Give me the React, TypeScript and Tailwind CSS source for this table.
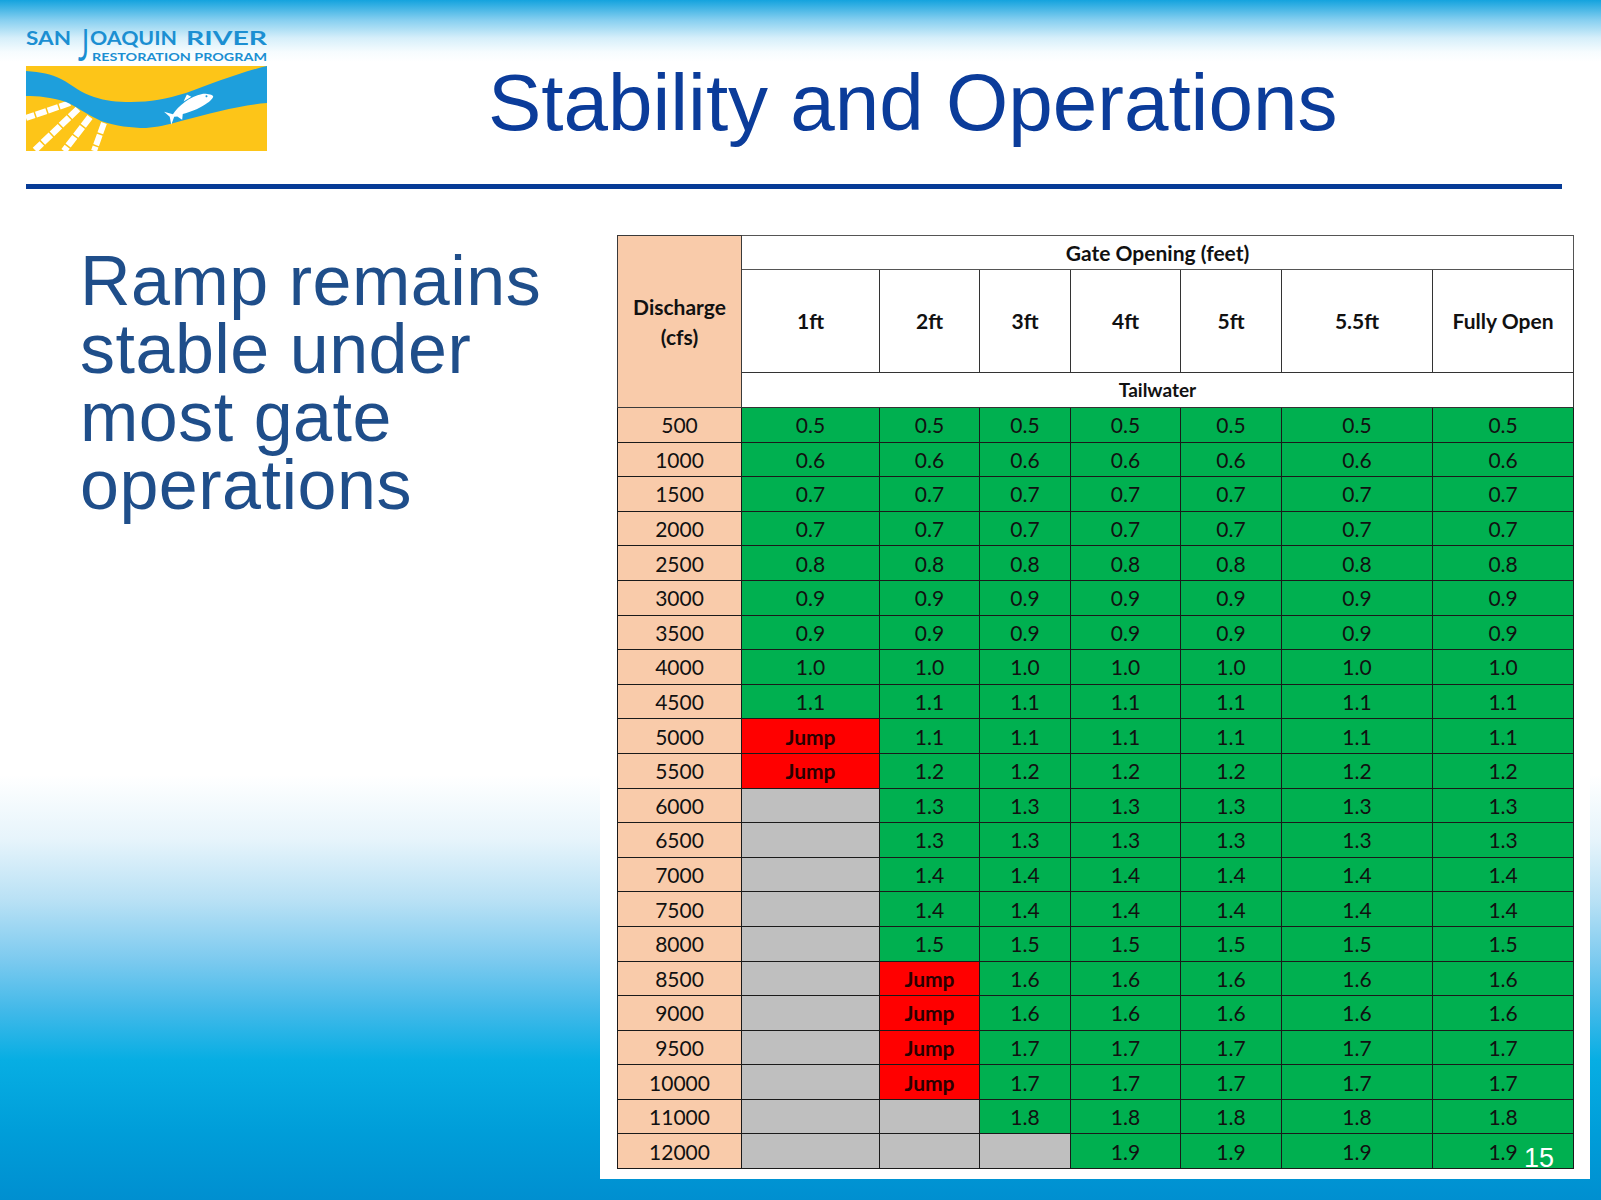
import React from "react";

type Cell = string;

const rowsRaw: string[][] = [
  ["500", "0.5"],
  ["1000", "0.6"],
  ["1500", "0.7"],
  ["2000", "0.7"],
  ["2500", "0.8"],
  ["3000", "0.9"],
  ["3500", "0.9"],
  ["4000", "1.0"],
  ["4500", "1.1"],
  ["5000", "1.1", "J"],
  ["5500", "1.2", "J"],
  ["6000", "1.3", "G"],
  ["6500", "1.3", "G"],
  ["7000", "1.4", "G"],
  ["7500", "1.4", "G"],
  ["8000", "1.5", "G"],
  ["8500", "1.6", "G", "J"],
  ["9000", "1.6", "G", "J"],
  ["9500", "1.7", "G", "J"],
  ["10000", "1.7", "G", "J"],
  ["11000", "1.8", "G", "G"],
  ["12000", "1.9", "G", "G", "G"],
];

const rows = rowsRaw.map(([label, val, ...over]) => {
  const cells: Cell[] = Array.from({ length: 7 }, (_, i) => (i < over.length ? over[i] : val));
  return { label, cells };
});

const headers = ["1ft", "2ft", "3ft", "4ft", "5ft", "5.5ft", "Fully Open"];

function Logo() {
  return (
    <svg width="241" height="137" viewBox="0 -12 241 137" className="block">
      <g fill="#1b8fd2" fontFamily="Lato, 'Open Sans', sans-serif" fontWeight="700">
        <text x="0" y="19" fontSize="19" textLength="45" lengthAdjust="spacingAndGlyphs">SAN</text>
        <text x="52" y="35" fontSize="45" fontWeight="400" textLength="11" lengthAdjust="spacingAndGlyphs">J</text>
        <text x="64" y="19" fontSize="19" textLength="87" lengthAdjust="spacingAndGlyphs">OAQUIN</text>
        <text x="160" y="19" fontSize="19" textLength="81" lengthAdjust="spacingAndGlyphs">RIVER</text>
        <text x="66" y="35" fontSize="11.5" textLength="175" lengthAdjust="spacingAndGlyphs">RESTORATION PROGRAM</text>
      </g>
      <g transform="translate(0,40)">
        <rect x="0" y="0" width="241" height="85" fill="#fdc518" />
        <g stroke="#ffffff" strokeLinecap="butt" fill="none" strokeDasharray="11 1.5">
          <path d="M44 37 L0 52" strokeWidth="6" />
          <path d="M52 43 L9 84" strokeWidth="6.5" />
          <path d="M64 51 L38 85" strokeWidth="6.5" />
          <path d="M78 57 L68 85" strokeWidth="6" />
        </g>
        <path
          d="M0 5 C15 6 25 8 35 13 C48 20 55 27 68 31 C80 35 90 36 105 36 C125 36 140 33 160 27 C185 18 215 6 241 0 L241 37 C215 39 185 47 155 55 C140 59 132 61 120 62 C105 62 90 60 75 55 C60 48 50 40 40 36 C25 31 12 30 0 30 Z"
          fill="#1e9fdc"
        />
        <g transform="translate(141,52) rotate(-25)">
          <path
            d="M0 -7 L7 -1 C15 -6 30 -10 42 -7 C47 -5 51 -2 51 0 C48 4 32 6 16 3 L13 8 L10 3 L7 2 L1 8 L3 0 Z M22 -8 L28 -13 L31 -9 Z"
            fill="#ffffff"
          />
          <circle cx="45" cy="-3" r="1" fill="#1e9fdc" />
        </g>
      </g>
    </svg>
  );
}

function cellClass(c: Cell) {
  if (c === "J") return "bg-[#ff0000] font-bold text-[#2a0000]";
  if (c === "G") return "bg-[#bfbfbf]";
  return "bg-[#00b050] text-[#111111]";
}

function DataTable() {
  return (
    <table className="table-fixed border-collapse w-[956px] font-['Lato','Open_Sans',sans-serif] text-[21px] text-[#111111]">
      <colgroup>
        <col className="w-[124px]" />
        <col className="w-[138px]" />
        <col className="w-[100px]" />
        <col className="w-[91px]" />
        <col className="w-[110px]" />
        <col className="w-[101px]" />
        <col className="w-[151px]" />
        <col className="w-[141px]" />
      </colgroup>
      <thead>
        <tr className="h-[34px]">
          <th
            rowSpan={3}
            className="border border-[#3a3a3a] bg-[#f9cbaa] font-bold leading-[30px] align-middle text-center p-0"
          >
            Discharge
            <br />
            (cfs)
          </th>
          <th colSpan={7} className="border border-[#555555] bg-white font-bold text-center p-0 align-middle">
            Gate Opening (feet)
          </th>
        </tr>
        <tr className="h-[103px]">
          {headers.map((h) => (
            <th key={h} className="border border-[#333333] bg-white font-bold text-center p-0 align-middle">
              {h}
            </th>
          ))}
        </tr>
        <tr className="h-[35px]">
          <th colSpan={7} className="border border-[#333333] bg-white font-bold text-[19px] text-center p-0 align-middle">
            Tailwater
          </th>
        </tr>
      </thead>
      <tbody>
        {rows.map((r) => (
          <tr key={r.label} className="h-[34.6px]">
            <td className="border border-[#1a1a1a] bg-[#f9cbaa] text-center p-0 align-middle leading-none">
              {r.label}
            </td>
            {r.cells.map((c, i) => (
              <td
                key={i}
                className={`border border-[#1a1a1a] text-center p-0 align-middle leading-none ${cellClass(c)}`}
              >
                {c === "J" ? "Jump" : c === "G" ? "" : c}
              </td>
            ))}
          </tr>
        ))}
      </tbody>
    </table>
  );
}

export default function App() {
  return (
    <div className="relative w-[1601px] h-[1200px] overflow-hidden font-['Liberation_Sans',Arial,sans-serif] bg-[linear-gradient(to_bottom,#14a3de_0px,#86cff0_20px,#d6effa_38px,#f6fcfe_52px,#ffffff_62px,#ffffff_775px,#e6f4fb_840px,#b9e1f5_900px,#7ccaef_960px,#42b9e9_1010px,#07aee3_1060px,#009ed9_1130px,#008fd0_1200px)]">
      <div className="flex items-start pl-[26px] pt-[14px]">
        <Logo />
        <h1 className="ml-[221px] mt-[49px] text-[80px] leading-[80px] font-normal text-[#0b3c9a] whitespace-nowrap">
          Stability and Operations
        </h1>
      </div>
      <div className="ml-[26px] mt-[33px] w-[1536px] h-[5px] bg-[#063b96]" />
      <div className="flex items-start pl-[80px] pt-[36px]">
        <div className="w-[520px] mt-[22px] text-[70px] leading-[68px] tracking-[0.5px] text-[#1f4e8a]">
          Ramp remains
          <br />
          stable under
          <br />
          most gate
          <br />
          operations
        </div>
        <div className="w-[990px] bg-white pt-[10px] pb-[10px] pl-[17px] pr-[17px]">
          <DataTable />
        </div>
      </div>
      <div className="absolute left-[1524px] top-[1145px] text-[27px] leading-[27px] text-white">15</div>
    </div>
  );
}
